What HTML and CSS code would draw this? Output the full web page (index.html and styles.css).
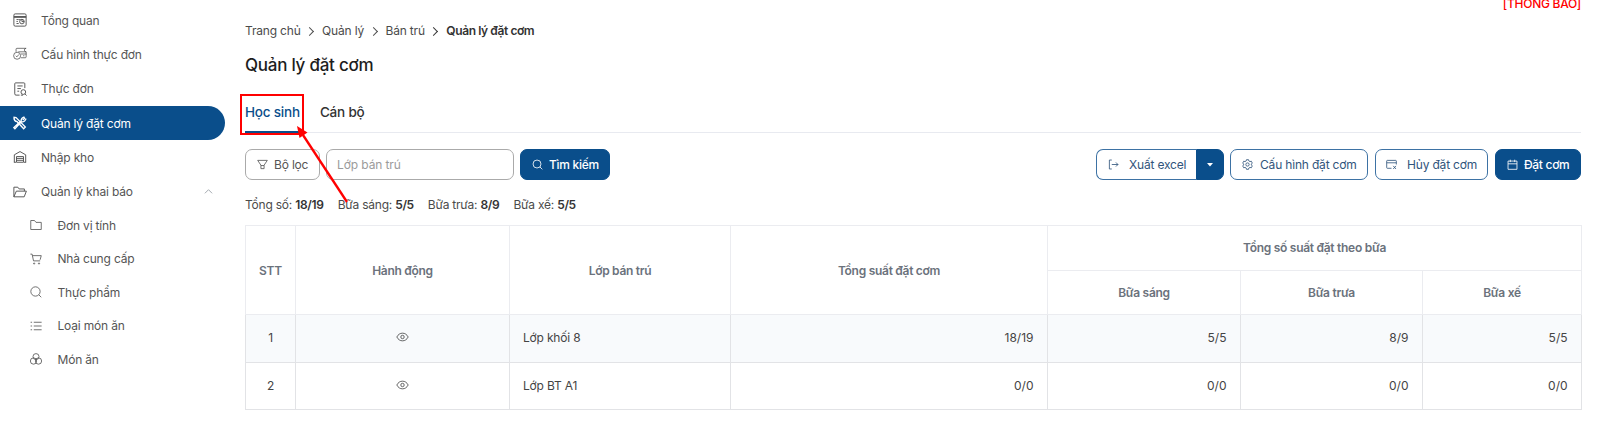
FILE: index.html
```html
<!DOCTYPE html>
<html lang="vi">
<head>
	<meta charset="UTF-8">
	<title>Quản lý đặt cơm</title>
	<link rel="stylesheet" href="styles.css">
</head>
<body>

	<nav class="sidebar">
		<ul class="menu">
			<li class="menu-item">
				<svg class="icon" viewBox="0 0 16 16"><rect x="1" y="1" width="14" height="14" rx="1.5"/><path d="M1 4h14M1 5h14M4 7.5h2.5M4 9.7h1.5M4 12h2.5M7 7.5h1.5"/><circle cx="10.2" cy="9.8" r="2.6"/><path d="M10.2 9.8V7.2M10.2 9.8h2.6"/></svg>
				<a href="#">Tổng quan</a>
			</li>
			<li class="menu-item">
				<svg class="icon thin" viewBox="0 0 16 16"><path d="M3.5 5.5V2.500a1 1 0 0 1 1-1H15M15 1.500a2 2 0 0 0 0 4H6M9 8h6.500M15 5.500v5.800a1 1 0 0 1-1 1H9"/><circle cx="4.700" cy="10" r="4"/><path d="M3.200 10l1.200 1.300 2.400-2.800M11.500 10h1.500"/></svg>
				<a href="#">Cấu hình thực đơn</a>
			</li>
			<li class="menu-item">
				<svg class="icon" viewBox="0 0 16 16"><path d="M7.500 15H3.500a1.500 1.500 0 0 1-1.500-1.500V2a1 1 0 0 1 1-1h9.500a1 1 0 0 1 1 1V7M5 4.500h6M5 7.500h4M5 10.500h2"/><circle cx="11.800" cy="11.500" r="2.700"/><path d="M13.600 13.500L15.500 15.500M9 15h2.500"/></svg>
				<a href="#">Thực đơn</a>
			</li>
			<li class="menu-item active">
				<svg class="icon bold" viewBox="0 0 16 16"><path d="M1.200 1.500c-.3 2.500 1 4.500 3.500 5l7.500 8 1.900-1.900L3.500 1.800z"/><path d="M9.400 6.500c-.5-2 1-4.500 3.700-5.500M15 3c-1 2.700-3.500 4-5.500 3.600L2.200 14.600.9 13.300 8.600 6M13.800 2.100l-2.600 2.600"/></svg>
				<a href="#">Quản lý đặt cơm</a>
			</li>
			<li class="menu-item">
				<svg class="icon" viewBox="0 0 16 16"><path d="M1.500 14V5.500L8 1.800l6.500 3.700V14M1 14h2.500M12.500 14H15M4 14V7.500h8V14zM4 9.600h8M4 11.800h8"/></svg>
				<a href="#">Nhập kho</a>
			</li>
			<li class="menu-item">
				<svg class="icon" viewBox="0 0 16 16"><path d="M1 13.500V2.500h4.500l1.500 2h6v2.500M1 13.500l2.800-6.500H15.300l-2.500 6.500z"/></svg>
				<a href="#">Quản lý khai báo</a>
				<svg class="arrow-up" viewBox="0 0 10 10"><path d="M1 7L5 3 9 7"/></svg>
			</li>
		</ul>
		<ul class="sub-menu">
			<li class="menu-item">
				<svg class="icon" viewBox="0 0 16 16"><path d="M1 14V2h5l2 2.500h7V14z"/></svg>
				<a href="#">Đơn vị tính</a>
			</li>
			<li class="menu-item">
				<svg class="icon" viewBox="0 0 16 16"><path d="M.5 1.500h2.300l1.900 9h8.800M3.300 3.500H15l-1.500 5.500"/><circle cx="5.500" cy="14" r=".8"/><circle cx="12" cy="14" r=".8"/></svg>
				<a href="#">Nhà cung cấp</a>
			</li>
			<li class="menu-item">
				<svg class="icon" viewBox="0 0 16 16"><circle cx="7.300" cy="7.300" r="6.200"/><path d="M11.800 11.800L15 15"/></svg>
				<a href="#">Thực phẩm</a>
			</li>
			<li class="menu-item">
				<svg class="icon" viewBox="0 0 16 16"><path d="M5 3H15.500M5 8H15.500M5 13H15.500M.800 3h2M.800 8h2M.800 13h2"/></svg>
				<a href="#">Loại món ăn</a>
			</li>
			<li class="menu-item">
				<svg class="icon" viewBox="0 0 16 16"><circle cx="8" cy="4.800" r="4"/><circle cx="4.700" cy="10.700" r="4.200"/><circle cx="11.300" cy="10.700" r="4.200"/></svg>
				<a href="#">Món ăn</a>
			</li>
		</ul>
	</nav>

	<main class="content">
		<div class="top">
			<ul class="breadcrumb">
				<li>Trang chủ</li>
				<li>Quản lý</li>
				<li>Bán trú</li>
				<li class="current">Quản lý đặt cơm</li>
			</ul>
			<span class="notice">[THÔNG BÁO]</span>
		</div>

		<h1 class="title">Quản lý đặt cơm</h1>

		<div class="tabs">
			<a href="#" class="tab active">Học sinh</a>
			<a href="#" class="tab">Cán bộ</a>
			<!-- khung đỏ và mũi tên chỉ vào tab Học sinh -->
			<span class="mark"></span>
			<svg class="mark-arrow" viewBox="0 0 56 82"><path class="line" d="M51 77L7 10"/><path class="head" d="M1 1L11.500 7.500l-8 5.500z"/></svg>
		</div>

		<div class="toolbar">
			<button class="btn btn-filter">
				<svg class="icon" viewBox="0 0 16 16"><path d="M1 2h14l-4.700 7v5H5.700V9zM5.700 9.500h4.600"/></svg>
				Bộ lọc
			</button>
			<input class="search" type="text" placeholder="Lớp bán trú">
			<button class="btn btn-search primary">
				<svg class="icon" viewBox="0 0 16 16"><circle cx="7.300" cy="7.300" r="5.800"/><path d="M11.500 11.500L15 15"/></svg>
				Tìm kiếm
			</button>
			<div class="btn-group">
				<button class="btn btn-excel">
					<svg class="icon" viewBox="0 0 16 16"><path d="M5.500 1.500H2v13h3.500M5.500 8h9M11.500 5l3 3-3 3"/></svg>
					Xuất excel
				</button>
				<button class="btn btn-drop primary">
					<svg class="caret" viewBox="0 0 6 4"><path d="M0 0h6L3 3.500z"/></svg>
				</button>
			</div>
			<button class="btn btn-config">
				<svg class="icon" viewBox="0 0 16 16"><path d="M6.500 1h3l.5 1.900 1.500.9 2-.6 1.500 2.700L13.600 7.300v1.400l1.400 1.400-1.500 2.700-2-.6-1.500.9-.5 1.900h-3L6 13.100l-1.500-.9-2 .6L1 10.100l1.400-1.400V7.300L1 5.900l1.500-2.700 2 .6L6 2.900z"/><circle cx="8" cy="8" r="2.400"/></svg>
				Cấu hình đặt cơm
			</button>
			<button class="btn btn-cancel">
				<svg class="icon" viewBox="0 0 16 16"><path d="M8 13.500H2a1 1 0 0 1-1-1V3a1 1 0 0 1 1-1h12a1 1 0 0 1 1 1v5M1 5.500h14M10.500 10l4 4.500M14.500 10l-4 4.500"/></svg>
				Hủy đặt cơm
			</button>
			<button class="btn btn-order primary">
				<svg class="icon" viewBox="0 0 16 16"><path d="M1.500 3h13v12h-13zM1.500 7h13M4.800 1v3.500M11.200 1v3.500"/></svg>
				Đặt cơm
			</button>
		</div>

		<div class="summary">
			<span>Tổng số: <b>18/19</b></span>
			<span>Bữa sáng: <b>5/5</b></span>
			<span>Bữa trưa: <b>8/9</b></span>
			<span>Bữa xế: <b>5/5</b></span>
		</div>

		<table class="table">
			<colgroup>
				<col class="c-stt">
				<col class="c-act">
				<col class="c-class">
				<col class="c-total">
				<col class="c-m1">
				<col class="c-m2">
				<col class="c-m3">
			</colgroup>
			<thead>
				<tr>
					<th rowspan="2">STT</th>
					<th rowspan="2">Hành động</th>
					<th rowspan="2">Lớp bán trú</th>
					<th rowspan="2">Tổng suất đặt cơm</th>
					<th colspan="3">Tổng số suất đặt theo bữa</th>
				</tr>
				<tr>
					<th>Bữa sáng</th>
					<th>Bữa trưa</th>
					<th>Bữa xế</th>
				</tr>
			</thead>
			<tbody>
				<tr class="odd">
					<td class="center">1</td>
					<td class="center"><svg class="eye" viewBox="0 0 16 12"><path d="M1 6c1.700-3.200 4-4.700 7-4.700S13.300 2.800 15 6c-1.700 3.200-4 4.700-7 4.700S2.700 9.200 1 6z"/><circle cx="8" cy="6" r="2.100"/></svg></td>
					<td>Lớp khối 8</td>
					<td class="num">18/19</td>
					<td class="num">5/5</td>
					<td class="num">8/9</td>
					<td class="num">5/5</td>
				</tr>
				<tr>
					<td class="center">2</td>
					<td class="center"><svg class="eye" viewBox="0 0 16 12"><path d="M1 6c1.700-3.200 4-4.700 7-4.700S13.300 2.800 15 6c-1.700 3.200-4 4.700-7 4.700S2.700 9.200 1 6z"/><circle cx="8" cy="6" r="2.100"/></svg></td>
					<td>Lớp BT A1</td>
					<td class="num">0/0</td>
					<td class="num">0/0</td>
					<td class="num">0/0</td>
					<td class="num">0/0</td>
				</tr>
			</tbody>
		</table>
	</main>

</body>
</html>
```
FILE: styles.css
```css
*{
	box-sizing: border-box;
}
body{
	margin: 0;
	height: 444px;
	display: flex;
	overflow: hidden;
	background: #fff;
	color: #4b4b4b;
	font: 12px/18px Inter, "Liberation Sans", sans-serif;
	letter-spacing: -.18px;
}
ul{
	list-style: none;
	margin: 0;
	padding: 0;
}
a{
	color: inherit;
	text-decoration: none;
}
svg{
	fill: none;
	stroke: currentColor;
	flex: none;
}
.icon{
	width: 12px;
	height: 12px;
	stroke-width: 1.1;
}

/* sidebar */
.sidebar{
	width: 225px;
	flex: none;
	padding-top: 3px;
}
.menu-item{
	display: flex;
	align-items: center;
	height: 34.3px;
	padding-left: 13px;
	color: #555;
}
.menu-item a{
	padding-top: 1px;
}
.menu .icon{
	width: 14px;
	height: 14px;
	margin-right: 14px;
}
.menu .thin{
	stroke-width: .9;
}
.menu .bold{
	stroke-width: 1.5;
}
.menu-item.active{
	background: #0a4e8b;
	border-radius: 0 17px 17px 0;
	color: #fff;
}
.arrow-up{
	width: 9px;
	height: 9px;
	margin-left: auto;
	margin-right: 12px;
	color: #9aa0a8;
}
.sub-menu .menu-item{
	height: 33.4px;
	padding-left: 30px;
}
.sub-menu .icon{
	margin-right: 15.5px;
}

/* content */
.content{
	width: 1336px;
	margin-left: 20px;
}
.top{
	display: flex;
	justify-content: space-between;
	height: 52px;
}
.breadcrumb{
	display: flex;
	padding-top: 22px;
}
.breadcrumb li + li::before{
	content: "";
	display: inline-block;
	width: 6px;
	height: 6px;
	margin: 0 9px 0 5.5px;
	border: solid;
	border-width: 1.3px 1.3px 0 0;
	transform: rotate(45deg) scale(.9);
}
.breadcrumb .current{
	font-weight: 600;
	letter-spacing: -.4px;
	color: #333;
}
.notice{
	margin-top: -5px;
	font-weight: 500;
	letter-spacing: -.28px;
	color: #f00;
}
.title{
	margin: 0;
	height: 41px;
	font-size: 17px;
	line-height: 26px;
	font-weight: 500;
	letter-spacing: -.25px;
	color: #1d1d1d;
}
.tabs{
	position: relative;
	display: flex;
	gap: 20px;
	height: 40px;
	border-bottom: 1px solid #e8eaf0;
	font-size: 13.5px;
	line-height: 38px;
	font-weight: 500;
	letter-spacing: -.2px;
	color: #333;
}
.tab{
	height: 40px;
}
.tab.active{
	color: #0a4e8b;
	border-bottom: 2px solid #0a4e8b;
}
.mark{
	position: absolute;
	left: -5px;
	top: 1px;
	width: 64px;
	height: 41px;
	border: 2px solid #f00;
}
.mark-arrow{
	position: absolute;
	left: 51px;
	top: 32px;
	width: 56px;
	height: 82px;
}
.mark-arrow .line{
	stroke: #f00;
	stroke-width: 2.3;
}
.mark-arrow .head{
	stroke: none;
	fill: #f00;
}

.toolbar{
	display: flex;
	margin-top: 16px;
}
.btn{
	display: flex;
	align-items: center;
	height: 31px;
	padding: 0 0 0 11px;
	border: 1px solid #3d72a4;
	border-radius: 7px;
	background: #fff;
	color: #31557c;
	font: inherit;
	letter-spacing: inherit;
	white-space: nowrap;
}
.btn .icon{
	width: 11px;
	height: 11px;
	stroke-width: 1.2;
}
.primary{
	background: #0a4e8b;
	border-color: #0a4e8b;
	color: #fff;
	font-weight: 500;
	letter-spacing: -.3px;
}
.btn-filter{
	width: 75px;
	border-color: #aaa;
	color: #555;
}
.btn-filter .icon,
.btn-search .icon{
	margin-right: 6px;
}
.search{
	width: 188px;
	height: 31px;
	margin: 0 6px;
	padding: 0 10px;
	border: 1px solid #aaa;
	border-radius: 7px;
	font: inherit;
	letter-spacing: -.1px;
}
.search::placeholder{
	color: #9b9b9b;
}
.btn-search{
	width: 90px;
}
.btn-group{
	display: flex;
	width: 128px;
	margin-left: auto;
}
.btn-excel{
	width: 100px;
	border-right: 0;
	border-radius: 7px 0 0 7px;
}
.btn-excel .icon{
	margin-right: 10px;
}
.btn-drop{
	width: 28px;
	padding: 0;
	justify-content: center;
	border-radius: 0 7px 7px 0;
}
.caret{
	width: 6px;
	height: 4px;
	fill: #fff;
	stroke: none;
}
.btn-config{
	width: 138px;
	margin-left: 6px;
}
.btn-config .icon{
	margin-right: 7px;
}
.btn-cancel{
	width: 113px;
	margin: 0 7px 0 7px;
	padding-left: 10px;
}
.btn-cancel .icon{
	margin-right: 10px;
}
.btn-order{
	width: 86px;
}
.btn-order .icon{
	margin-right: 6px;
}

.summary{
	display: flex;
	gap: 14px;
	height: 45px;
	padding-top: 16px;
	letter-spacing: -.22px;
}
.summary b{
	font-weight: 600;
	letter-spacing: -.33px;
	color: #333;
}

.table{
	width: 1336px;
	table-layout: fixed;
	border-collapse: collapse;
}
.c-stt{ width: 50px; }
.c-act{ width: 214px; }
.c-class{ width: 221px; }
.c-total{ width: 317px; }
.c-m1{ width: 193px; }
.c-m2{ width: 182px; }
.c-m3{ width: 159px; }
.table th,
.table td{
	border: 1px solid #e2e3e6;
	padding: 0 14px 0 13px;
}
.table th{
	height: 44.5px;
	padding: 1px 0 0;
	border-color: #ebecf0;
	font-weight: 600;
	letter-spacing: -.28px;
	color: #6b727c;
}
.table td{
	height: 47.5px;
	color: #444;
}
.table .odd{
	background: #f8fafc;
}
.table .center{
	padding: 0;
	text-align: center;
}
.table .num{
	padding-right: 13.5px;
	text-align: right;
	letter-spacing: 0;
}
.eye{
	display: block;
	width: 13px;
	height: 10px;
	margin: -2px auto 0;
}
```
